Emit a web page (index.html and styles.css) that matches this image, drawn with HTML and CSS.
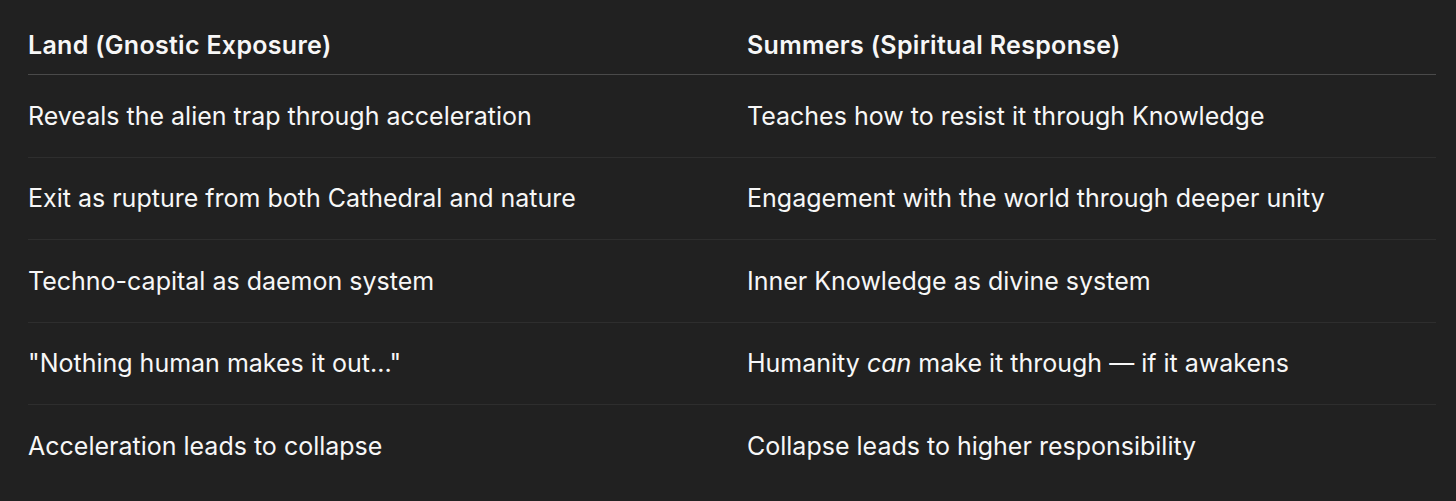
FILE: index.html
```html
<!DOCTYPE html>
<html lang="en">
<head>
<meta charset="utf-8">
<title>Land vs Summers</title>
<link rel="stylesheet" href="styles.css">
</head>
<body>
<main class="page">
  <table class="compare">
    <thead>
      <tr>
        <th>Land (Gnostic Exposure)</th>
        <th>Summers (Spiritual Response)</th>
      </tr>
    </thead>
    <tbody>
      <tr>
        <td>Reveals the alien trap through acceleration</td>
        <td>Teaches how to resist it through Knowledge</td>
      </tr>
      <tr>
        <td>Exit as rupture from both Cathedral and nature</td>
        <td>Engagement with the world through deeper unity</td>
      </tr>
      <tr>
        <td>Techno-capital as daemon system</td>
        <td>Inner Knowledge as divine system</td>
      </tr>
      <tr>
        <td>"Nothing human makes it out..."</td>
        <td>Humanity <em>can</em> make it through — if it awakens</td>
      </tr>
      <tr>
        <td>Acceleration leads to collapse</td>
        <td>Collapse leads to higher responsibility</td>
      </tr>
    </tbody>
  </table>
</main>
</body>
</html>
```
FILE: styles.css
```css
html, body {
  margin: 0;
  padding: 0;
  background: #212121;
}
.page {
  padding: 16px 20px 0 28px;
  font-family: Inter, "Noto Sans", "Liberation Sans", sans-serif;
  color: #f7f7f7;
}
.compare {
  width: 1408px;
  border-collapse: collapse;
  table-layout: fixed;
}
.compare th,
.compare td {
  text-align: left;
  padding: 0;
  vertical-align: middle;
  font-size: 25px;
}
.compare th:first-child,
.compare td:first-child {
  width: 719px;
}
.compare th {
  font-weight: 600;
  letter-spacing: 0.3px;
  height: 58px;
  border-bottom: 1px solid #4a4a4a;
}
.compare td {
  font-weight: 400;
  height: 81.5px;
  border-bottom: 1px solid #2e2e2e;
}
.compare tbody tr:last-child td {
  border-bottom: none;
}
.compare em {
  font-style: italic;
}
```
